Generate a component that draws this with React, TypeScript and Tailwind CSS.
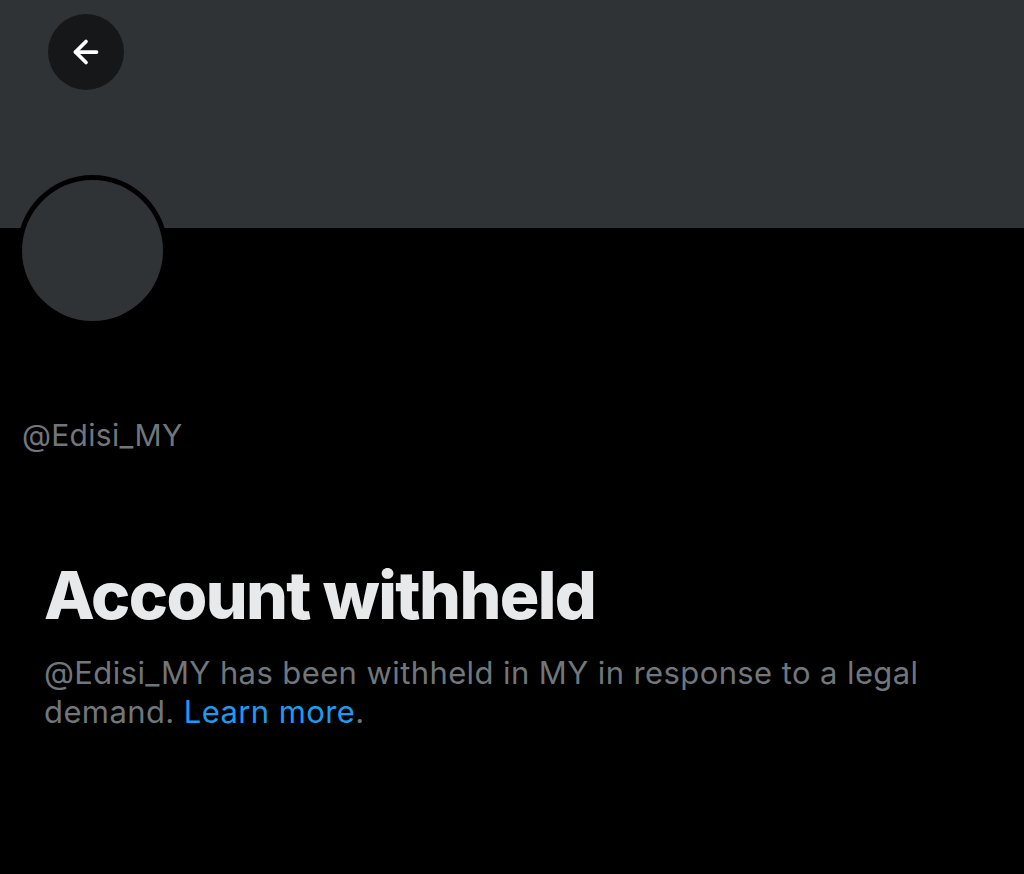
import { ArrowLeft } from 'lucide-react'

export default function App() {
  return (
    <div className="min-h-[874px] w-[1024px] bg-black font-['Inter',sans-serif] overflow-hidden">
      {/* Banner */}
      <div className="h-[228px] bg-[#2f3336] pl-[48px] pt-[14px]">
        <button className="w-[76px] h-[76px] rounded-full bg-[#151718] flex items-center justify-center text-white">
          <ArrowLeft size={36} strokeWidth={2.5} />
        </button>
      </div>

      {/* Avatar */}
      <div className="-mt-[53px] ml-[17px] w-[151px] h-[151px] rounded-full bg-black p-[5px]">
        <div className="w-full h-full rounded-full bg-[#2f3336]" />
      </div>

      <div className="pl-[22px] mt-[91px] text-[30px] leading-[36px] tracking-[0.3px] text-[#71767b]">@Edisi_MY</div>

      <div className="px-[44px] mt-[104px]">
        <h1 className="text-[66px] leading-[76px] font-extrabold tracking-[-1.6px] text-[#e7e9ea]">
          Account withheld
        </h1>
        <p className="mt-[20px] w-[900px] text-[31px] leading-[39px] tracking-[0.4px] text-[#71767b]">
          @Edisi_MY has been withheld in MY in response to a legal demand.{' '}
          <span className="text-[#1d9bf0]">Learn more</span>
          <span>.</span>
        </p>
      </div>
    </div>
  )
}
